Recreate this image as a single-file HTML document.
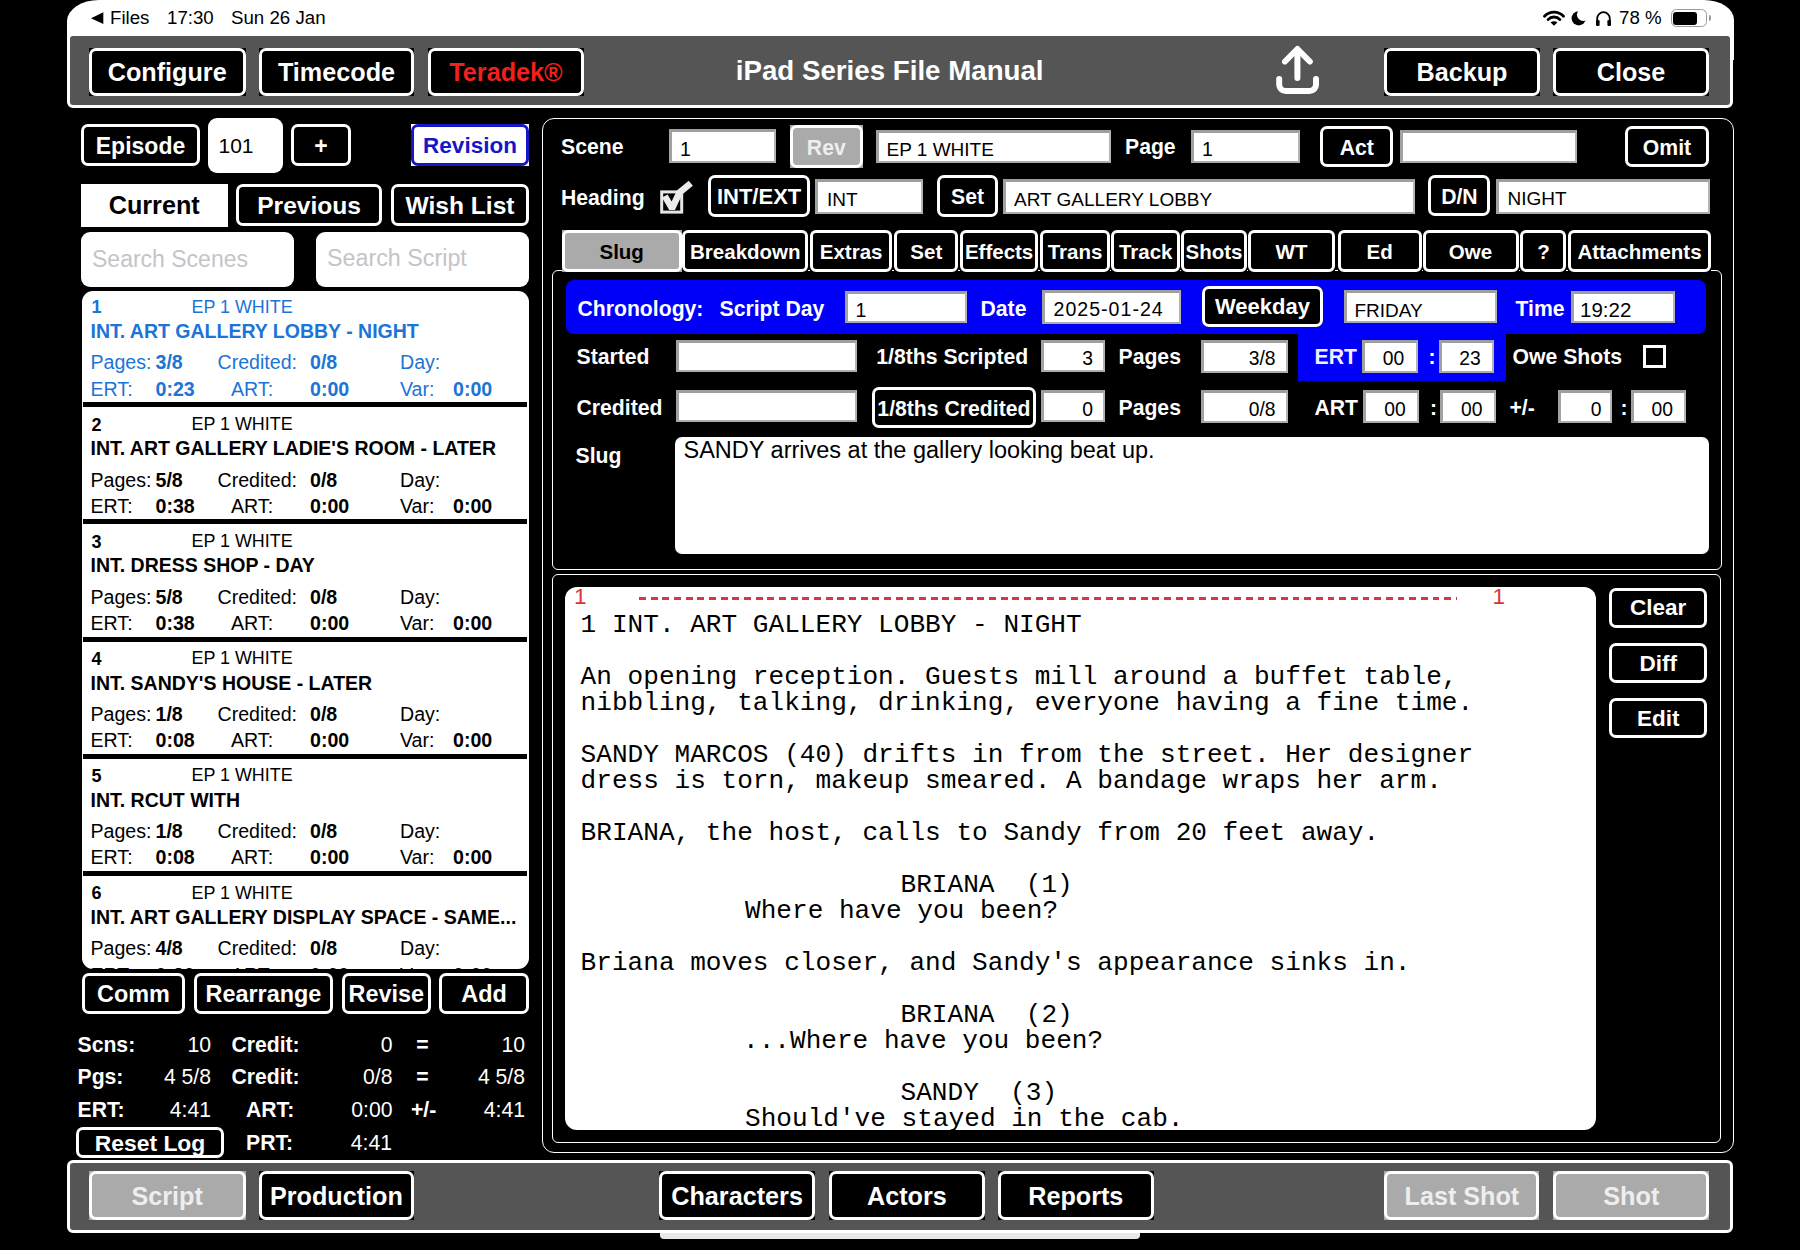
<!DOCTYPE html><html><head><meta charset="utf-8"><style>
html,body{margin:0;padding:0}
body{width:1800px;height:1250px;background:#000;position:relative;overflow:hidden;font-family:"Liberation Sans",sans-serif}
.a{position:absolute}
.t{position:absolute;white-space:pre}
.m{position:absolute;white-space:pre;font-family:"Liberation Mono",monospace}
</style></head><body>
<div class="a" style="left:67.0px;top:0.0px;width:1666.5px;height:60.0px;background:#fff;border-radius:32px 30px 0 0 / 21px 20px 0 0"></div>
<svg class="a" style="left:90px;top:11px" width="16" height="15" viewBox="0 0 16 15"><path d="M1 7.2 L13.3 1.3 L13.3 13.1 Z" fill="#000"/></svg>
<div class="t" style="left:110.0px;top:9.2px;font-size:18.7px;line-height:18.7px;font-weight:normal;color:#000;">Files</div>
<div class="t" style="left:167.0px;top:9.2px;font-size:18.7px;line-height:18.7px;font-weight:normal;color:#000;">17:30</div>
<div class="t" style="left:231.0px;top:9.2px;font-size:18.7px;line-height:18.7px;font-weight:normal;color:#000;">Sun 26 Jan</div>
<div class="t" style="left:1619.0px;top:9.2px;font-size:18.7px;line-height:18.7px;font-weight:normal;color:#000;">78 %</div>
<svg class="a" style="left:1543px;top:10px" width="22" height="17" viewBox="0 0 22 17"><path d="M1.5 6.2 A13 13 0 0 1 20.5 6.2" stroke="#000" stroke-width="2.8" fill="none" stroke-linecap="round"/><path d="M5 9.6 A8.2 8.2 0 0 1 17 9.6" stroke="#000" stroke-width="2.8" fill="none" stroke-linecap="round"/><path d="M11 15.8 L7.6 12.6 A4.8 4.8 0 0 1 14.4 12.6 Z" fill="#000"/></svg>
<svg class="a" style="left:1570px;top:9px" width="18" height="18" viewBox="0 0 18 18"><defs><mask id="mm"><rect width="18" height="18" fill="#fff"/><circle cx="13.2" cy="5.6" r="6.3" fill="#000"/></mask></defs><circle cx="8.7" cy="9.3" r="7.1" fill="#000" mask="url(#mm)"/></svg>
<svg class="a" style="left:1595px;top:10px" width="17" height="17" viewBox="0 0 17 17"><path d="M2.2 12 V8.5 A6.3 6.3 0 0 1 14.8 8.5 V12" stroke="#000" stroke-width="1.8" fill="none"/><rect x="1" y="10" width="3.6" height="6" rx="1.2" fill="#000"/><rect x="12.4" y="10" width="3.6" height="6" rx="1.2" fill="#000"/></svg>
<div class="a" style="left:1670.5px;top:9.3px;width:36.5px;height:18.0px;border:1.6px solid #999;border-radius:5.5px;box-sizing:border-box"></div>
<div class="a" style="left:1673.3px;top:12.2px;width:23.7px;height:12.4px;background:#000;border-radius:3px"></div>
<div class="a" style="left:1708.6px;top:15.0px;width:2.2px;height:6.3px;background:#999;border-radius:0 3px 3px 0"></div>
<div class="a" style="left:67.0px;top:33.0px;width:1666.0px;height:75.0px;background:#555;border:3px solid #fff;border-radius:6px;box-sizing:border-box"></div>
<div class="a" style="left:89.0px;top:47.5px;width:156.5px;height:48.5px;background:#000"></div>
<div class="a" style="left:89.0px;top:47.5px;width:156.5px;height:48.5px;border:3px solid #fff;border-radius:7px;box-sizing:border-box"></div>
<div class="t" style="left:-232.8px;width:800px;text-align:center;top:60.1px;font-size:25.2px;line-height:25.2px;font-weight:bold;color:#fff;">Configure</div>
<div class="a" style="left:258.7px;top:47.5px;width:155.6px;height:48.5px;background:#000"></div>
<div class="a" style="left:258.7px;top:47.5px;width:155.6px;height:48.5px;border:3px solid #fff;border-radius:7px;box-sizing:border-box"></div>
<div class="t" style="left:-63.5px;width:800px;text-align:center;top:60.1px;font-size:25.2px;line-height:25.2px;font-weight:bold;color:#fff;">Timecode</div>
<div class="a" style="left:428.3px;top:47.5px;width:155.4px;height:48.5px;background:#000"></div>
<div class="a" style="left:428.3px;top:47.5px;width:155.4px;height:48.5px;border:3px solid #fff;border-radius:7px;box-sizing:border-box"></div>
<div class="t" style="left:106.0px;width:800px;text-align:center;top:60.1px;font-size:25.2px;line-height:25.2px;font-weight:bold;color:#f0201a;">Teradek®</div>
<div class="t" style="left:489.7px;width:800px;text-align:center;top:56.5px;font-size:27.7px;line-height:27.7px;font-weight:bold;color:#fff;">iPad Series File Manual</div>
<div class="a" style="left:1384.0px;top:47.5px;width:156.0px;height:48.5px;background:#000"></div>
<div class="a" style="left:1384.0px;top:47.5px;width:156.0px;height:48.5px;border:3px solid #fff;border-radius:7px;box-sizing:border-box"></div>
<div class="t" style="left:1062.0px;width:800px;text-align:center;top:60.1px;font-size:25.2px;line-height:25.2px;font-weight:bold;color:#fff;">Backup</div>
<div class="a" style="left:1553.0px;top:47.5px;width:156.0px;height:48.5px;background:#000"></div>
<div class="a" style="left:1553.0px;top:47.5px;width:156.0px;height:48.5px;border:3px solid #fff;border-radius:7px;box-sizing:border-box"></div>
<div class="t" style="left:1231.0px;width:800px;text-align:center;top:60.1px;font-size:25.2px;line-height:25.2px;font-weight:bold;color:#fff;">Close</div>
<svg class="a" style="left:1270px;top:40px" width="56" height="60" viewBox="1270 40 56 60"><path d="M1297.4 78 V50" stroke="#fff" stroke-width="6" stroke-linecap="round" fill="none"/><path d="M1285 61.5 L1297.4 49 L1309.8 61.5" stroke="#fff" stroke-width="6" stroke-linecap="round" stroke-linejoin="round" fill="none"/><path d="M1279.2 79 V84.5 A6.5 6.5 0 0 0 1285.7 91 H1309.5 A6.5 6.5 0 0 0 1316 84.5 V79" stroke="#fff" stroke-width="6" stroke-linecap="round" fill="none"/></svg>
<div class="a" style="left:81.0px;top:124.0px;width:119.0px;height:42.3px;background:#000"></div>
<div class="a" style="left:81.0px;top:124.0px;width:119.0px;height:42.3px;border:3px solid #fff;border-radius:7px;box-sizing:border-box"></div>
<div class="t" style="left:-259.5px;width:800px;text-align:center;top:134.6px;font-size:23px;line-height:23px;font-weight:bold;color:#fff;">Episode</div>
<div class="a" style="left:208.0px;top:118.0px;width:75.0px;height:54.5px;background:#fff;border-radius:9px"></div>
<div class="t" style="left:218.5px;top:135.2px;font-size:21px;line-height:21px;font-weight:normal;color:#000;">101</div>
<div class="a" style="left:291.0px;top:124.0px;width:60.0px;height:42.3px;background:#000"></div>
<div class="a" style="left:291.0px;top:124.0px;width:60.0px;height:42.3px;border:3px solid #fff;border-radius:7px;box-sizing:border-box"></div>
<div class="t" style="left:-79.0px;width:800px;text-align:center;top:134.6px;font-size:23px;line-height:23px;font-weight:bold;color:#fff;">+</div>
<div class="a" style="left:411.0px;top:123.7px;width:118.0px;height:42.6px;background:#fff"></div>
<div class="a" style="left:411.0px;top:123.7px;width:118.0px;height:42.6px;border:3px solid #1616c8;border-radius:7px;box-sizing:border-box"></div>
<div class="t" style="left:70.0px;width:800px;text-align:center;top:134.7px;font-size:22.5px;line-height:22.5px;font-weight:bold;color:#1616c8;">Revision</div>
<div class="a" style="left:81.0px;top:184.0px;width:146.5px;height:43.0px;background:#fff"></div>
<div class="t" style="left:-245.8px;width:800px;text-align:center;top:192.9px;font-size:25.2px;line-height:25.2px;font-weight:bold;color:#000;">Current</div>
<div class="a" style="left:236.0px;top:184.3px;width:146.3px;height:42.0px;background:#000"></div>
<div class="a" style="left:236.0px;top:184.3px;width:146.3px;height:42.0px;border:3px solid #fff;border-radius:7px;box-sizing:border-box"></div>
<div class="t" style="left:-90.9px;width:800px;text-align:center;top:193.9px;font-size:24.6px;line-height:24.6px;font-weight:bold;color:#fff;">Previous</div>
<div class="a" style="left:391.0px;top:184.3px;width:138.0px;height:42.0px;background:#000"></div>
<div class="a" style="left:391.0px;top:184.3px;width:138.0px;height:42.0px;border:3px solid #fff;border-radius:7px;box-sizing:border-box"></div>
<div class="t" style="left:60.0px;width:800px;text-align:center;top:193.9px;font-size:24.6px;line-height:24.6px;font-weight:bold;color:#fff;">Wish List</div>
<div class="a" style="left:81.0px;top:231.5px;width:213.0px;height:55.0px;background:#fff;border-radius:9px"></div>
<div class="t" style="left:92.0px;top:247.5px;font-size:23px;line-height:23px;font-weight:normal;color:#c4c4c8;">Search Scenes</div>
<div class="a" style="left:316.0px;top:231.5px;width:213.0px;height:55.0px;background:#fff;border-radius:9px"></div>
<div class="t" style="left:327.0px;top:247.3px;font-size:23.3px;line-height:23.3px;font-weight:normal;color:#c4c4c8;">Search Script</div>
<div class="a" style="left:81.5px;top:290.5px;width:447px;height:678px;background:#fff;border-radius:11px;overflow:hidden">
<div class="t" style="left:9.9px;top:7.9px;font-size:18px;line-height:18px;font-weight:bold;color:#1b74d6;">1</div>
<div class="t" style="left:110.0px;top:8.1px;font-size:17.9px;line-height:17.9px;font-weight:normal;color:#1b74d6;">EP 1 WHITE</div>
<div class="t" style="left:9.0px;top:31.4px;font-size:19.5px;line-height:19.5px;font-weight:bold;color:#1b74d6;">INT. ART GALLERY LOBBY - NIGHT</div>
<div class="t" style="left:9.0px;top:62.9px;font-size:19.6px;line-height:19.6px;font-weight:normal;color:#1b74d6;">Pages:</div>
<div class="t" style="left:74.0px;top:62.9px;font-size:19.6px;line-height:19.6px;font-weight:bold;color:#1b74d6;">3/8</div>
<div class="t" style="left:136.0px;top:62.9px;font-size:19.6px;line-height:19.6px;font-weight:normal;color:#1b74d6;">Credited:</div>
<div class="t" style="left:228.5px;top:62.9px;font-size:19.6px;line-height:19.6px;font-weight:bold;color:#1b74d6;">0/8</div>
<div class="t" style="left:318.5px;top:62.9px;font-size:19.6px;line-height:19.6px;font-weight:normal;color:#1b74d6;">Day:</div>
<div class="t" style="left:9.0px;top:89.0px;font-size:19.6px;line-height:19.6px;font-weight:normal;color:#1b74d6;">ERT:</div>
<div class="t" style="left:74.0px;top:89.0px;font-size:19.6px;line-height:19.6px;font-weight:bold;color:#1b74d6;">0:23</div>
<div class="t" style="left:149.5px;top:89.0px;font-size:19.6px;line-height:19.6px;font-weight:normal;color:#1b74d6;">ART:</div>
<div class="t" style="left:228.5px;top:89.0px;font-size:19.6px;line-height:19.6px;font-weight:bold;color:#1b74d6;">0:00</div>
<div class="t" style="left:318.5px;top:89.0px;font-size:19.6px;line-height:19.6px;font-weight:normal;color:#1b74d6;">Var:</div>
<div class="t" style="left:371.5px;top:89.0px;font-size:19.6px;line-height:19.6px;font-weight:bold;color:#1b74d6;">0:00</div>
<div class="a" style="left:1.0px;top:111.7px;width:444.5px;height:5.0px;background:#000"></div>
<div class="t" style="left:9.9px;top:125.1px;font-size:18px;line-height:18px;font-weight:bold;color:#000;">2</div>
<div class="t" style="left:110.0px;top:125.3px;font-size:17.9px;line-height:17.9px;font-weight:normal;color:#000;">EP 1 WHITE</div>
<div class="t" style="left:9.0px;top:148.6px;font-size:19.5px;line-height:19.5px;font-weight:bold;color:#000;">INT. ART GALLERY LADIE'S ROOM - LATER</div>
<div class="t" style="left:9.0px;top:180.1px;font-size:19.6px;line-height:19.6px;font-weight:normal;color:#000;">Pages:</div>
<div class="t" style="left:74.0px;top:180.1px;font-size:19.6px;line-height:19.6px;font-weight:bold;color:#000;">5/8</div>
<div class="t" style="left:136.0px;top:180.1px;font-size:19.6px;line-height:19.6px;font-weight:normal;color:#000;">Credited:</div>
<div class="t" style="left:228.5px;top:180.1px;font-size:19.6px;line-height:19.6px;font-weight:bold;color:#000;">0/8</div>
<div class="t" style="left:318.5px;top:180.1px;font-size:19.6px;line-height:19.6px;font-weight:normal;color:#000;">Day:</div>
<div class="t" style="left:9.0px;top:206.2px;font-size:19.6px;line-height:19.6px;font-weight:normal;color:#000;">ERT:</div>
<div class="t" style="left:74.0px;top:206.2px;font-size:19.6px;line-height:19.6px;font-weight:bold;color:#000;">0:38</div>
<div class="t" style="left:149.5px;top:206.2px;font-size:19.6px;line-height:19.6px;font-weight:normal;color:#000;">ART:</div>
<div class="t" style="left:228.5px;top:206.2px;font-size:19.6px;line-height:19.6px;font-weight:bold;color:#000;">0:00</div>
<div class="t" style="left:318.5px;top:206.2px;font-size:19.6px;line-height:19.6px;font-weight:normal;color:#000;">Var:</div>
<div class="t" style="left:371.5px;top:206.2px;font-size:19.6px;line-height:19.6px;font-weight:bold;color:#000;">0:00</div>
<div class="a" style="left:1.0px;top:228.9px;width:444.5px;height:5.0px;background:#000"></div>
<div class="t" style="left:9.9px;top:242.3px;font-size:18px;line-height:18px;font-weight:bold;color:#000;">3</div>
<div class="t" style="left:110.0px;top:242.5px;font-size:17.9px;line-height:17.9px;font-weight:normal;color:#000;">EP 1 WHITE</div>
<div class="t" style="left:9.0px;top:265.8px;font-size:19.5px;line-height:19.5px;font-weight:bold;color:#000;">INT. DRESS SHOP - DAY</div>
<div class="t" style="left:9.0px;top:297.3px;font-size:19.6px;line-height:19.6px;font-weight:normal;color:#000;">Pages:</div>
<div class="t" style="left:74.0px;top:297.3px;font-size:19.6px;line-height:19.6px;font-weight:bold;color:#000;">5/8</div>
<div class="t" style="left:136.0px;top:297.3px;font-size:19.6px;line-height:19.6px;font-weight:normal;color:#000;">Credited:</div>
<div class="t" style="left:228.5px;top:297.3px;font-size:19.6px;line-height:19.6px;font-weight:bold;color:#000;">0/8</div>
<div class="t" style="left:318.5px;top:297.3px;font-size:19.6px;line-height:19.6px;font-weight:normal;color:#000;">Day:</div>
<div class="t" style="left:9.0px;top:323.4px;font-size:19.6px;line-height:19.6px;font-weight:normal;color:#000;">ERT:</div>
<div class="t" style="left:74.0px;top:323.4px;font-size:19.6px;line-height:19.6px;font-weight:bold;color:#000;">0:38</div>
<div class="t" style="left:149.5px;top:323.4px;font-size:19.6px;line-height:19.6px;font-weight:normal;color:#000;">ART:</div>
<div class="t" style="left:228.5px;top:323.4px;font-size:19.6px;line-height:19.6px;font-weight:bold;color:#000;">0:00</div>
<div class="t" style="left:318.5px;top:323.4px;font-size:19.6px;line-height:19.6px;font-weight:normal;color:#000;">Var:</div>
<div class="t" style="left:371.5px;top:323.4px;font-size:19.6px;line-height:19.6px;font-weight:bold;color:#000;">0:00</div>
<div class="a" style="left:1.0px;top:346.1px;width:444.5px;height:5.0px;background:#000"></div>
<div class="t" style="left:9.9px;top:359.5px;font-size:18px;line-height:18px;font-weight:bold;color:#000;">4</div>
<div class="t" style="left:110.0px;top:359.7px;font-size:17.9px;line-height:17.9px;font-weight:normal;color:#000;">EP 1 WHITE</div>
<div class="t" style="left:9.0px;top:383.0px;font-size:19.5px;line-height:19.5px;font-weight:bold;color:#000;">INT. SANDY'S HOUSE - LATER</div>
<div class="t" style="left:9.0px;top:414.5px;font-size:19.6px;line-height:19.6px;font-weight:normal;color:#000;">Pages:</div>
<div class="t" style="left:74.0px;top:414.5px;font-size:19.6px;line-height:19.6px;font-weight:bold;color:#000;">1/8</div>
<div class="t" style="left:136.0px;top:414.5px;font-size:19.6px;line-height:19.6px;font-weight:normal;color:#000;">Credited:</div>
<div class="t" style="left:228.5px;top:414.5px;font-size:19.6px;line-height:19.6px;font-weight:bold;color:#000;">0/8</div>
<div class="t" style="left:318.5px;top:414.5px;font-size:19.6px;line-height:19.6px;font-weight:normal;color:#000;">Day:</div>
<div class="t" style="left:9.0px;top:440.6px;font-size:19.6px;line-height:19.6px;font-weight:normal;color:#000;">ERT:</div>
<div class="t" style="left:74.0px;top:440.6px;font-size:19.6px;line-height:19.6px;font-weight:bold;color:#000;">0:08</div>
<div class="t" style="left:149.5px;top:440.6px;font-size:19.6px;line-height:19.6px;font-weight:normal;color:#000;">ART:</div>
<div class="t" style="left:228.5px;top:440.6px;font-size:19.6px;line-height:19.6px;font-weight:bold;color:#000;">0:00</div>
<div class="t" style="left:318.5px;top:440.6px;font-size:19.6px;line-height:19.6px;font-weight:normal;color:#000;">Var:</div>
<div class="t" style="left:371.5px;top:440.6px;font-size:19.6px;line-height:19.6px;font-weight:bold;color:#000;">0:00</div>
<div class="a" style="left:1.0px;top:463.3px;width:444.5px;height:5.0px;background:#000"></div>
<div class="t" style="left:9.9px;top:476.7px;font-size:18px;line-height:18px;font-weight:bold;color:#000;">5</div>
<div class="t" style="left:110.0px;top:476.9px;font-size:17.9px;line-height:17.9px;font-weight:normal;color:#000;">EP 1 WHITE</div>
<div class="t" style="left:9.0px;top:500.2px;font-size:19.5px;line-height:19.5px;font-weight:bold;color:#000;">INT. RCUT WITH</div>
<div class="t" style="left:9.0px;top:531.7px;font-size:19.6px;line-height:19.6px;font-weight:normal;color:#000;">Pages:</div>
<div class="t" style="left:74.0px;top:531.7px;font-size:19.6px;line-height:19.6px;font-weight:bold;color:#000;">1/8</div>
<div class="t" style="left:136.0px;top:531.7px;font-size:19.6px;line-height:19.6px;font-weight:normal;color:#000;">Credited:</div>
<div class="t" style="left:228.5px;top:531.7px;font-size:19.6px;line-height:19.6px;font-weight:bold;color:#000;">0/8</div>
<div class="t" style="left:318.5px;top:531.7px;font-size:19.6px;line-height:19.6px;font-weight:normal;color:#000;">Day:</div>
<div class="t" style="left:9.0px;top:557.8px;font-size:19.6px;line-height:19.6px;font-weight:normal;color:#000;">ERT:</div>
<div class="t" style="left:74.0px;top:557.8px;font-size:19.6px;line-height:19.6px;font-weight:bold;color:#000;">0:08</div>
<div class="t" style="left:149.5px;top:557.8px;font-size:19.6px;line-height:19.6px;font-weight:normal;color:#000;">ART:</div>
<div class="t" style="left:228.5px;top:557.8px;font-size:19.6px;line-height:19.6px;font-weight:bold;color:#000;">0:00</div>
<div class="t" style="left:318.5px;top:557.8px;font-size:19.6px;line-height:19.6px;font-weight:normal;color:#000;">Var:</div>
<div class="t" style="left:371.5px;top:557.8px;font-size:19.6px;line-height:19.6px;font-weight:bold;color:#000;">0:00</div>
<div class="a" style="left:1.0px;top:580.5px;width:444.5px;height:5.0px;background:#000"></div>
<div class="t" style="left:9.9px;top:593.9px;font-size:18px;line-height:18px;font-weight:bold;color:#000;">6</div>
<div class="t" style="left:110.0px;top:594.1px;font-size:17.9px;line-height:17.9px;font-weight:normal;color:#000;">EP 1 WHITE</div>
<div class="t" style="left:9.0px;top:617.4px;font-size:19.5px;line-height:19.5px;font-weight:bold;color:#000;">INT. ART GALLERY DISPLAY SPACE - SAME...</div>
<div class="t" style="left:9.0px;top:648.9px;font-size:19.6px;line-height:19.6px;font-weight:normal;color:#000;">Pages:</div>
<div class="t" style="left:74.0px;top:648.9px;font-size:19.6px;line-height:19.6px;font-weight:bold;color:#000;">4/8</div>
<div class="t" style="left:136.0px;top:648.9px;font-size:19.6px;line-height:19.6px;font-weight:normal;color:#000;">Credited:</div>
<div class="t" style="left:228.5px;top:648.9px;font-size:19.6px;line-height:19.6px;font-weight:bold;color:#000;">0/8</div>
<div class="t" style="left:318.5px;top:648.9px;font-size:19.6px;line-height:19.6px;font-weight:normal;color:#000;">Day:</div>
<div class="t" style="left:9.0px;top:675.0px;font-size:19.6px;line-height:19.6px;font-weight:normal;color:#000;">ERT:</div>
<div class="t" style="left:74.0px;top:675.0px;font-size:19.6px;line-height:19.6px;font-weight:bold;color:#000;">0:30</div>
<div class="t" style="left:149.5px;top:675.0px;font-size:19.6px;line-height:19.6px;font-weight:normal;color:#000;">ART:</div>
<div class="t" style="left:228.5px;top:675.0px;font-size:19.6px;line-height:19.6px;font-weight:bold;color:#000;">0:00</div>
<div class="t" style="left:318.5px;top:675.0px;font-size:19.6px;line-height:19.6px;font-weight:normal;color:#000;">Var:</div>
<div class="t" style="left:371.5px;top:675.0px;font-size:19.6px;line-height:19.6px;font-weight:bold;color:#000;">0:00</div>
</div>
<div class="a" style="left:81.7px;top:973.0px;width:103.3px;height:41.0px;background:#000"></div>
<div class="a" style="left:81.7px;top:973.0px;width:103.3px;height:41.0px;border:3px solid #fff;border-radius:7px;box-sizing:border-box"></div>
<div class="t" style="left:-266.6px;width:800px;text-align:center;top:982.7px;font-size:23.4px;line-height:23.4px;font-weight:bold;color:#fff;">Comm</div>
<div class="a" style="left:193.5px;top:973.0px;width:139.7px;height:41.0px;background:#000"></div>
<div class="a" style="left:193.5px;top:973.0px;width:139.7px;height:41.0px;border:3px solid #fff;border-radius:7px;box-sizing:border-box"></div>
<div class="t" style="left:-136.6px;width:800px;text-align:center;top:982.7px;font-size:23.4px;line-height:23.4px;font-weight:bold;color:#fff;">Rearrange</div>
<div class="a" style="left:341.5px;top:973.0px;width:89.6px;height:41.0px;background:#000"></div>
<div class="a" style="left:341.5px;top:973.0px;width:89.6px;height:41.0px;border:3px solid #fff;border-radius:7px;box-sizing:border-box"></div>
<div class="t" style="left:-13.7px;width:800px;text-align:center;top:982.7px;font-size:23.4px;line-height:23.4px;font-weight:bold;color:#fff;">Revise</div>
<div class="a" style="left:439.4px;top:973.0px;width:89.3px;height:41.0px;background:#000"></div>
<div class="a" style="left:439.4px;top:973.0px;width:89.3px;height:41.0px;border:3px solid #fff;border-radius:7px;box-sizing:border-box"></div>
<div class="t" style="left:84.1px;width:800px;text-align:center;top:982.7px;font-size:23.4px;line-height:23.4px;font-weight:bold;color:#fff;">Add</div>
<div class="t" style="left:77.5px;top:1034.2px;font-size:21.2px;line-height:21.2px;font-weight:bold;color:#fff;">Scns:</div>
<div class="t" style="left:-589.0px;width:800px;text-align:right;top:1034.2px;font-size:21.2px;line-height:21.2px;font-weight:normal;color:#fff;">10</div>
<div class="t" style="left:231.4px;top:1034.2px;font-size:21.2px;line-height:21.2px;font-weight:bold;color:#fff;">Credit:</div>
<div class="t" style="left:-407.5px;width:800px;text-align:right;top:1034.2px;font-size:21.2px;line-height:21.2px;font-weight:normal;color:#fff;">0</div>
<div class="t" style="left:22.5px;width:800px;text-align:center;top:1034.2px;font-size:21.2px;line-height:21.2px;font-weight:bold;color:#fff;">=</div>
<div class="t" style="left:-275.0px;width:800px;text-align:right;top:1034.2px;font-size:21.2px;line-height:21.2px;font-weight:normal;color:#fff;">10</div>
<div class="t" style="left:77.5px;top:1066.4px;font-size:21.2px;line-height:21.2px;font-weight:bold;color:#fff;">Pgs:</div>
<div class="t" style="left:-589.0px;width:800px;text-align:right;top:1066.4px;font-size:21.2px;line-height:21.2px;font-weight:normal;color:#fff;">4 5/8</div>
<div class="t" style="left:231.4px;top:1066.4px;font-size:21.2px;line-height:21.2px;font-weight:bold;color:#fff;">Credit:</div>
<div class="t" style="left:-407.5px;width:800px;text-align:right;top:1066.4px;font-size:21.2px;line-height:21.2px;font-weight:normal;color:#fff;">0/8</div>
<div class="t" style="left:22.5px;width:800px;text-align:center;top:1066.4px;font-size:21.2px;line-height:21.2px;font-weight:bold;color:#fff;">=</div>
<div class="t" style="left:-275.0px;width:800px;text-align:right;top:1066.4px;font-size:21.2px;line-height:21.2px;font-weight:normal;color:#fff;">4 5/8</div>
<div class="t" style="left:77.5px;top:1099.0px;font-size:21.2px;line-height:21.2px;font-weight:bold;color:#fff;">ERT:</div>
<div class="t" style="left:-589.0px;width:800px;text-align:right;top:1099.0px;font-size:21.2px;line-height:21.2px;font-weight:normal;color:#fff;">4:41</div>
<div class="t" style="left:246.0px;top:1099.0px;font-size:21.2px;line-height:21.2px;font-weight:bold;color:#fff;">ART:</div>
<div class="t" style="left:-407.5px;width:800px;text-align:right;top:1099.0px;font-size:21.2px;line-height:21.2px;font-weight:normal;color:#fff;">0:00</div>
<div class="t" style="left:411.0px;top:1099.0px;font-size:21.2px;line-height:21.2px;font-weight:bold;color:#fff;">+/-</div>
<div class="t" style="left:-275.0px;width:800px;text-align:right;top:1099.0px;font-size:21.2px;line-height:21.2px;font-weight:normal;color:#fff;">4:41</div>
<div class="a" style="left:76.0px;top:1126.5px;width:148.0px;height:31.5px;background:#000"></div>
<div class="a" style="left:76.0px;top:1126.5px;width:148.0px;height:31.5px;border:3px solid #fff;border-radius:7px;box-sizing:border-box"></div>
<div class="t" style="left:-250.0px;width:800px;text-align:center;top:1131.7px;font-size:22.9px;line-height:22.9px;font-weight:bold;color:#fff;">Reset Log</div>
<div class="t" style="left:246.0px;top:1131.7px;font-size:21.2px;line-height:21.2px;font-weight:bold;color:#fff;">PRT:</div>
<div class="t" style="left:-408.0px;width:800px;text-align:right;top:1131.7px;font-size:21.2px;line-height:21.2px;font-weight:normal;color:#fff;">4:41</div>
<div class="a" style="left:541.5px;top:118.0px;width:1192.0px;height:1035.0px;border:1.5px solid #fff;border-radius:12px;box-sizing:border-box"></div>
<div class="t" style="left:561.0px;top:135.5px;font-size:21.2px;line-height:21.2px;font-weight:bold;color:#fff;">Scene</div>
<div class="a" style="left:669.2px;top:129.0px;width:106.9px;height:34.0px;background:#fff;border-style:solid;border-color:#9e9e9e #b4b4b4 #acacac #a2a2a2;border-width:3px 2px 2px 3px;box-sizing:border-box"></div>
<div class="t" style="left:680.0px;top:139.7px;font-size:19.5px;line-height:19.5px;font-weight:normal;color:#000;">1</div>
<div class="a" style="left:789.6px;top:125.1px;width:73.4px;height:42.6px;background:#aaa"></div>
<div class="a" style="left:789.6px;top:125.1px;width:73.4px;height:42.6px;border:3px solid #fff;border-radius:7px;box-sizing:border-box"></div>
<div class="t" style="left:426.3px;width:800px;text-align:center;top:136.7px;font-size:21.2px;line-height:21.2px;font-weight:bold;color:#eee;">Rev</div>
<div class="a" style="left:875.7px;top:129.5px;width:235.3px;height:33.3px;background:#fff;border-style:solid;border-color:#9e9e9e #b4b4b4 #acacac #a2a2a2;border-width:3px 2px 2px 3px;box-sizing:border-box"></div>
<div class="t" style="left:886.5px;top:140.1px;font-size:19px;line-height:19px;font-weight:normal;color:#000;">EP 1 WHITE</div>
<div class="t" style="left:1125.0px;top:135.8px;font-size:21.2px;line-height:21.2px;font-weight:bold;color:#fff;">Page</div>
<div class="a" style="left:1190.7px;top:129.5px;width:109.5px;height:33.1px;background:#fff;border-style:solid;border-color:#9e9e9e #b4b4b4 #acacac #a2a2a2;border-width:3px 2px 2px 3px;box-sizing:border-box"></div>
<div class="t" style="left:1202.0px;top:139.7px;font-size:19.5px;line-height:19.5px;font-weight:normal;color:#000;">1</div>
<div class="a" style="left:1320.4px;top:126.0px;width:72.9px;height:41.0px;background:#000"></div>
<div class="a" style="left:1320.4px;top:126.0px;width:72.9px;height:41.0px;border:3px solid #fff;border-radius:7px;box-sizing:border-box"></div>
<div class="t" style="left:956.8px;width:800px;text-align:center;top:136.8px;font-size:21.2px;line-height:21.2px;font-weight:bold;color:#fff;">Act</div>
<div class="a" style="left:1400.4px;top:129.5px;width:176.8px;height:33.1px;background:#fff;border-style:solid;border-color:#9e9e9e #b4b4b4 #acacac #a2a2a2;border-width:3px 2px 2px 3px;box-sizing:border-box"></div>
<div class="a" style="left:1625.2px;top:126.0px;width:83.5px;height:41.0px;background:#000"></div>
<div class="a" style="left:1625.2px;top:126.0px;width:83.5px;height:41.0px;border:3px solid #fff;border-radius:7px;box-sizing:border-box"></div>
<div class="t" style="left:1267.0px;width:800px;text-align:center;top:136.8px;font-size:21.2px;line-height:21.2px;font-weight:bold;color:#fff;">Omit</div>
<div class="t" style="left:561.0px;top:187.0px;font-size:21.2px;line-height:21.2px;font-weight:bold;color:#fff;">Heading</div>
<svg class="a" style="left:655px;top:175px" width="45" height="45" viewBox="655 175 45 45"><rect x="661.7" y="191.9" width="20" height="20.2" stroke="#e6e6e6" stroke-width="3" fill="none"/><path d="M664.8 196 L672 208.5 L679.5 192.5 L690.8 183.2" stroke="#ececec" stroke-width="6.5" fill="none" stroke-linejoin="bevel"/></svg>
<div class="a" style="left:708.3px;top:175.0px;width:101.7px;height:41.7px;background:#000"></div>
<div class="a" style="left:708.3px;top:175.0px;width:101.7px;height:41.7px;border:3px solid #fff;border-radius:7px;box-sizing:border-box"></div>
<div class="t" style="left:359.1px;width:800px;text-align:center;top:185.8px;font-size:22px;line-height:22px;font-weight:bold;color:#fff;">INT/EXT</div>
<div class="a" style="left:815.3px;top:178.8px;width:107.4px;height:35.2px;background:#fff;border-style:solid;border-color:#9e9e9e #b4b4b4 #acacac #a2a2a2;border-width:3px 2px 2px 3px;box-sizing:border-box"></div>
<div class="t" style="left:827.0px;top:189.9px;font-size:19px;line-height:19px;font-weight:normal;color:#000;">INT</div>
<div class="a" style="left:936.7px;top:175.0px;width:61.6px;height:41.7px;background:#000"></div>
<div class="a" style="left:936.7px;top:175.0px;width:61.6px;height:41.7px;border:3px solid #fff;border-radius:7px;box-sizing:border-box"></div>
<div class="t" style="left:567.5px;width:800px;text-align:center;top:186.2px;font-size:21.2px;line-height:21.2px;font-weight:bold;color:#fff;">Set</div>
<div class="a" style="left:1003.3px;top:178.8px;width:411.4px;height:35.2px;background:#fff;border-style:solid;border-color:#9e9e9e #b4b4b4 #acacac #a2a2a2;border-width:3px 2px 2px 3px;box-sizing:border-box"></div>
<div class="t" style="left:1014.0px;top:189.9px;font-size:19px;line-height:19px;font-weight:normal;color:#000;">ART GALLERY LOBBY</div>
<div class="a" style="left:1428.4px;top:175.0px;width:62.0px;height:41.0px;background:#000"></div>
<div class="a" style="left:1428.4px;top:175.0px;width:62.0px;height:41.0px;border:3px solid #fff;border-radius:7px;box-sizing:border-box"></div>
<div class="t" style="left:1059.4px;width:800px;text-align:center;top:185.8px;font-size:21.2px;line-height:21.2px;font-weight:bold;color:#fff;">D/N</div>
<div class="a" style="left:1496.4px;top:178.8px;width:214.1px;height:35.2px;background:#fff;border-style:solid;border-color:#9e9e9e #b4b4b4 #acacac #a2a2a2;border-width:3px 2px 2px 3px;box-sizing:border-box"></div>
<div class="t" style="left:1507.5px;top:188.7px;font-size:19px;line-height:19px;font-weight:normal;color:#000;">NIGHT</div>
<div class="a" style="left:552.0px;top:270.3px;width:1169.5px;height:299.5px;border:1.5px solid #fff;border-radius:6px;box-sizing:border-box"></div>
<div class="a" style="left:561.7px;top:230.2px;width:120.0px;height:41.6px;background:#aaa"></div>
<div class="a" style="left:561.7px;top:230.2px;width:120.0px;height:41.6px;border:3px solid #fff;border-radius:6px;box-sizing:border-box"></div>
<div class="t" style="left:221.7px;width:800px;text-align:center;top:241.7px;font-size:20.5px;line-height:20.5px;font-weight:bold;color:#000;">Slug</div>
<div class="a" style="left:682.3px;top:230.2px;width:126.0px;height:41.6px;background:#000"></div>
<div class="a" style="left:682.3px;top:230.2px;width:126.0px;height:41.6px;border:3px solid #fff;border-radius:6px;box-sizing:border-box"></div>
<div class="t" style="left:345.3px;width:800px;text-align:center;top:241.7px;font-size:20.5px;line-height:20.5px;font-weight:bold;color:#fff;">Breakdown</div>
<div class="a" style="left:810.0px;top:230.2px;width:82.3px;height:41.6px;background:#000"></div>
<div class="a" style="left:810.0px;top:230.2px;width:82.3px;height:41.6px;border:3px solid #fff;border-radius:6px;box-sizing:border-box"></div>
<div class="t" style="left:451.1px;width:800px;text-align:center;top:241.7px;font-size:20.5px;line-height:20.5px;font-weight:bold;color:#fff;">Extras</div>
<div class="a" style="left:894.3px;top:230.2px;width:64.0px;height:41.6px;background:#000"></div>
<div class="a" style="left:894.3px;top:230.2px;width:64.0px;height:41.6px;border:3px solid #fff;border-radius:6px;box-sizing:border-box"></div>
<div class="t" style="left:526.3px;width:800px;text-align:center;top:241.7px;font-size:20.5px;line-height:20.5px;font-weight:bold;color:#fff;">Set</div>
<div class="a" style="left:960.0px;top:230.2px;width:78.3px;height:41.6px;background:#000"></div>
<div class="a" style="left:960.0px;top:230.2px;width:78.3px;height:41.6px;border:3px solid #fff;border-radius:6px;box-sizing:border-box"></div>
<div class="t" style="left:599.1px;width:800px;text-align:center;top:241.7px;font-size:20.5px;line-height:20.5px;font-weight:bold;color:#fff;">Effects</div>
<div class="a" style="left:1040.0px;top:230.2px;width:70.0px;height:41.6px;background:#000"></div>
<div class="a" style="left:1040.0px;top:230.2px;width:70.0px;height:41.6px;border:3px solid #fff;border-radius:6px;box-sizing:border-box"></div>
<div class="t" style="left:675.0px;width:800px;text-align:center;top:241.7px;font-size:20.5px;line-height:20.5px;font-weight:bold;color:#fff;">Trans</div>
<div class="a" style="left:1111.4px;top:230.2px;width:68.6px;height:41.6px;background:#000"></div>
<div class="a" style="left:1111.4px;top:230.2px;width:68.6px;height:41.6px;border:3px solid #fff;border-radius:6px;box-sizing:border-box"></div>
<div class="t" style="left:745.7px;width:800px;text-align:center;top:241.7px;font-size:20.5px;line-height:20.5px;font-weight:bold;color:#fff;">Track</div>
<div class="a" style="left:1181.0px;top:230.2px;width:65.9px;height:41.6px;background:#000"></div>
<div class="a" style="left:1181.0px;top:230.2px;width:65.9px;height:41.6px;border:3px solid #fff;border-radius:6px;box-sizing:border-box"></div>
<div class="t" style="left:814.0px;width:800px;text-align:center;top:241.7px;font-size:20.5px;line-height:20.5px;font-weight:bold;color:#fff;">Shots</div>
<div class="a" style="left:1247.6px;top:230.2px;width:87.8px;height:41.6px;background:#000"></div>
<div class="a" style="left:1247.6px;top:230.2px;width:87.8px;height:41.6px;border:3px solid #fff;border-radius:6px;box-sizing:border-box"></div>
<div class="t" style="left:891.5px;width:800px;text-align:center;top:241.7px;font-size:20.5px;line-height:20.5px;font-weight:bold;color:#fff;">WT</div>
<div class="a" style="left:1337.5px;top:230.2px;width:84.3px;height:41.6px;background:#000"></div>
<div class="a" style="left:1337.5px;top:230.2px;width:84.3px;height:41.6px;border:3px solid #fff;border-radius:6px;box-sizing:border-box"></div>
<div class="t" style="left:979.7px;width:800px;text-align:center;top:241.7px;font-size:20.5px;line-height:20.5px;font-weight:bold;color:#fff;">Ed</div>
<div class="a" style="left:1422.5px;top:230.2px;width:96.0px;height:41.6px;background:#000"></div>
<div class="a" style="left:1422.5px;top:230.2px;width:96.0px;height:41.6px;border:3px solid #fff;border-radius:6px;box-sizing:border-box"></div>
<div class="t" style="left:1070.5px;width:800px;text-align:center;top:241.7px;font-size:20.5px;line-height:20.5px;font-weight:bold;color:#fff;">Owe</div>
<div class="a" style="left:1520.3px;top:230.2px;width:46.2px;height:41.6px;background:#000"></div>
<div class="a" style="left:1520.3px;top:230.2px;width:46.2px;height:41.6px;border:3px solid #fff;border-radius:6px;box-sizing:border-box"></div>
<div class="t" style="left:1143.4px;width:800px;text-align:center;top:241.7px;font-size:20.5px;line-height:20.5px;font-weight:bold;color:#fff;">?</div>
<div class="a" style="left:1568.3px;top:230.2px;width:142.5px;height:41.6px;background:#000"></div>
<div class="a" style="left:1568.3px;top:230.2px;width:142.5px;height:41.6px;border:3px solid #fff;border-radius:6px;box-sizing:border-box"></div>
<div class="t" style="left:1239.5px;width:800px;text-align:center;top:241.7px;font-size:20.5px;line-height:20.5px;font-weight:bold;color:#fff;">Attachments</div>
<div class="a" style="left:565.7px;top:280.0px;width:1140.6px;height:53.5px;background:#0000f8;border-radius:8px"></div>
<div class="a" style="left:1297.8px;top:330.0px;width:207.8px;height:51.3px;background:#0000f8"></div>
<div class="t" style="left:577.5px;top:298.0px;font-size:21.2px;line-height:21.2px;font-weight:bold;color:#fff;">Chronology:</div>
<div class="t" style="left:719.5px;top:298.0px;font-size:21.2px;line-height:21.2px;font-weight:bold;color:#fff;">Script Day</div>
<div class="a" style="left:845.0px;top:291.0px;width:121.7px;height:32.3px;background:#fff;border-style:solid;border-color:#9e9e9e #b4b4b4 #acacac #a2a2a2;border-width:3px 2px 2px 3px;box-sizing:border-box"></div>
<div class="t" style="left:855.5px;top:300.5px;font-size:19.5px;line-height:19.5px;font-weight:normal;color:#000;">1</div>
<div class="t" style="left:980.5px;top:298.0px;font-size:21.2px;line-height:21.2px;font-weight:bold;color:#fff;">Date</div>
<div class="a" style="left:1042.3px;top:290.3px;width:139.2px;height:33.5px;background:#fff;border-style:solid;border-color:#9e9e9e #b4b4b4 #acacac #a2a2a2;border-width:3px 2px 2px 3px;box-sizing:border-box"></div>
<div class="t" style="left:1053.5px;top:300.4px;font-size:19.6px;line-height:19.6px;font-weight:normal;color:#000;letter-spacing:1px">2025-01-24</div>
<div class="a" style="left:1201.8px;top:286.0px;width:121.4px;height:41.0px;background:#000;border-radius:7px"></div>
<div class="a" style="left:1201.8px;top:286.0px;width:121.4px;height:41.0px;border:3px solid #fff;border-radius:7px;box-sizing:border-box"></div>
<div class="t" style="left:862.5px;width:800px;text-align:center;top:296.4px;font-size:22px;line-height:22px;font-weight:bold;color:#fff;">Weekday</div>
<div class="a" style="left:1343.6px;top:290.4px;width:153.4px;height:32.9px;background:#fff;border-style:solid;border-color:#9e9e9e #b4b4b4 #acacac #a2a2a2;border-width:3px 2px 2px 3px;box-sizing:border-box"></div>
<div class="t" style="left:1354.5px;top:300.9px;font-size:19px;line-height:19px;font-weight:normal;color:#000;">FRIDAY</div>
<div class="t" style="left:1515.5px;top:298.0px;font-size:21.2px;line-height:21.2px;font-weight:bold;color:#fff;">Time</div>
<div class="a" style="left:1570.7px;top:291.0px;width:104.0px;height:32.3px;background:#fff;border-style:solid;border-color:#9e9e9e #b4b4b4 #acacac #a2a2a2;border-width:3px 2px 2px 3px;box-sizing:border-box"></div>
<div class="t" style="left:1580.0px;top:299.6px;font-size:20.5px;line-height:20.5px;font-weight:normal;color:#000;">19:22</div>
<div class="t" style="left:576.5px;top:346.0px;font-size:21.2px;line-height:21.2px;font-weight:bold;color:#fff;">Started</div>
<div class="a" style="left:675.7px;top:340.0px;width:181.0px;height:32.3px;background:#fff;border-style:solid;border-color:#9e9e9e #b4b4b4 #acacac #a2a2a2;border-width:3px 2px 2px 3px;box-sizing:border-box"></div>
<div class="t" style="left:876.3px;top:346.0px;font-size:21.2px;line-height:21.2px;font-weight:bold;color:#fff;">1/8ths Scripted</div>
<div class="a" style="left:1040.7px;top:340.0px;width:64.3px;height:32.3px;background:#fff;border-style:solid;border-color:#9e9e9e #b4b4b4 #acacac #a2a2a2;border-width:3px 2px 2px 3px;box-sizing:border-box"></div>
<div class="t" style="left:293.0px;width:800px;text-align:right;top:349.2px;font-size:19.3px;line-height:19.3px;font-weight:normal;color:#000;">3</div>
<div class="t" style="left:1118.5px;top:346.0px;font-size:21.2px;line-height:21.2px;font-weight:bold;color:#fff;">Pages</div>
<div class="a" style="left:1200.5px;top:339.6px;width:87.1px;height:33.2px;background:#fff;border-style:solid;border-color:#9e9e9e #b4b4b4 #acacac #a2a2a2;border-width:3px 2px 2px 3px;box-sizing:border-box"></div>
<div class="t" style="left:475.5px;width:800px;text-align:right;top:349.2px;font-size:19.3px;line-height:19.3px;font-weight:normal;color:#000;">3/8</div>
<div class="t" style="left:1314.5px;top:346.0px;font-size:21.2px;line-height:21.2px;font-weight:bold;color:#f0f0ff;">ERT</div>
<div class="a" style="left:1361.5px;top:339.6px;width:56.0px;height:33.2px;background:#fff;border-style:solid;border-color:#9e9e9e #b4b4b4 #acacac #a2a2a2;border-width:3px 2px 2px 3px;box-sizing:border-box"></div>
<div class="t" style="left:993.5px;width:800px;text-align:center;top:349.2px;font-size:19.3px;line-height:19.3px;font-weight:normal;color:#000;">00</div>
<div class="t" style="left:1428.5px;top:346.0px;font-size:21.2px;line-height:21.2px;font-weight:bold;color:#fff;">:</div>
<div class="a" style="left:1438.5px;top:339.6px;width:55.2px;height:33.2px;background:#fff;border-style:solid;border-color:#9e9e9e #b4b4b4 #acacac #a2a2a2;border-width:3px 2px 2px 3px;box-sizing:border-box"></div>
<div class="t" style="left:1070.1px;width:800px;text-align:center;top:349.2px;font-size:19.3px;line-height:19.3px;font-weight:normal;color:#000;">23</div>
<div class="t" style="left:1512.5px;top:346.0px;font-size:21.2px;line-height:21.2px;font-weight:bold;color:#fff;">Owe Shots</div>
<div class="a" style="left:1642.5px;top:345.3px;width:23.1px;height:23.1px;border:3px solid #fff;box-sizing:border-box;background:#000"></div>
<div class="t" style="left:576.5px;top:397.0px;font-size:21.2px;line-height:21.2px;font-weight:bold;color:#fff;">Credited</div>
<div class="a" style="left:675.7px;top:390.0px;width:181.0px;height:32.3px;background:#fff;border-style:solid;border-color:#9e9e9e #b4b4b4 #acacac #a2a2a2;border-width:3px 2px 2px 3px;box-sizing:border-box"></div>
<div class="a" style="left:871.7px;top:387.3px;width:164.3px;height:40.4px;background:#000"></div>
<div class="a" style="left:871.7px;top:387.3px;width:164.3px;height:40.4px;border:3px solid #fff;border-radius:7px;box-sizing:border-box"></div>
<div class="t" style="left:553.9px;width:800px;text-align:center;top:397.8px;font-size:21.2px;line-height:21.2px;font-weight:bold;color:#fff;">1/8ths Credited</div>
<div class="a" style="left:1040.7px;top:390.0px;width:64.3px;height:32.3px;background:#fff;border-style:solid;border-color:#9e9e9e #b4b4b4 #acacac #a2a2a2;border-width:3px 2px 2px 3px;box-sizing:border-box"></div>
<div class="t" style="left:293.0px;width:800px;text-align:right;top:399.7px;font-size:19.3px;line-height:19.3px;font-weight:normal;color:#000;">0</div>
<div class="t" style="left:1118.5px;top:397.0px;font-size:21.2px;line-height:21.2px;font-weight:bold;color:#fff;">Pages</div>
<div class="a" style="left:1200.5px;top:389.7px;width:87.1px;height:32.9px;background:#fff;border-style:solid;border-color:#9e9e9e #b4b4b4 #acacac #a2a2a2;border-width:3px 2px 2px 3px;box-sizing:border-box"></div>
<div class="t" style="left:475.5px;width:800px;text-align:right;top:399.7px;font-size:19.3px;line-height:19.3px;font-weight:normal;color:#000;">0/8</div>
<div class="t" style="left:1314.5px;top:397.0px;font-size:21.2px;line-height:21.2px;font-weight:bold;color:#fff;">ART</div>
<div class="a" style="left:1362.9px;top:389.7px;width:56.3px;height:32.9px;background:#fff;border-style:solid;border-color:#9e9e9e #b4b4b4 #acacac #a2a2a2;border-width:3px 2px 2px 3px;box-sizing:border-box"></div>
<div class="t" style="left:995.1px;width:800px;text-align:center;top:399.7px;font-size:19.3px;line-height:19.3px;font-weight:normal;color:#000;">00</div>
<div class="t" style="left:1430.0px;top:397.0px;font-size:21.2px;line-height:21.2px;font-weight:bold;color:#fff;">:</div>
<div class="a" style="left:1439.5px;top:389.7px;width:56.5px;height:32.9px;background:#fff;border-style:solid;border-color:#9e9e9e #b4b4b4 #acacac #a2a2a2;border-width:3px 2px 2px 3px;box-sizing:border-box"></div>
<div class="t" style="left:1071.8px;width:800px;text-align:center;top:399.7px;font-size:19.3px;line-height:19.3px;font-weight:normal;color:#000;">00</div>
<div class="t" style="left:1509.5px;top:397.0px;font-size:21.2px;line-height:21.2px;font-weight:bold;color:#fff;">+/-</div>
<div class="a" style="left:1557.8px;top:389.7px;width:54.6px;height:32.9px;background:#fff;border-style:solid;border-color:#9e9e9e #b4b4b4 #acacac #a2a2a2;border-width:3px 2px 2px 3px;box-sizing:border-box"></div>
<div class="t" style="left:801.5px;width:800px;text-align:right;top:399.7px;font-size:19.3px;line-height:19.3px;font-weight:normal;color:#000;">0</div>
<div class="t" style="left:1620.5px;top:397.0px;font-size:21.2px;line-height:21.2px;font-weight:bold;color:#fff;">:</div>
<div class="a" style="left:1630.7px;top:389.7px;width:55.2px;height:32.9px;background:#fff;border-style:solid;border-color:#9e9e9e #b4b4b4 #acacac #a2a2a2;border-width:3px 2px 2px 3px;box-sizing:border-box"></div>
<div class="t" style="left:1262.3px;width:800px;text-align:center;top:399.7px;font-size:19.3px;line-height:19.3px;font-weight:normal;color:#000;">00</div>
<div class="t" style="left:575.5px;top:445.3px;font-size:21.2px;line-height:21.2px;font-weight:bold;color:#fff;">Slug</div>
<div class="a" style="left:675.0px;top:436.5px;width:1034.0px;height:117.3px;background:#fff;border-radius:7px"></div>
<div class="t" style="left:683.5px;top:438.6px;font-size:23.5px;line-height:23.5px;font-weight:normal;color:#000;">SANDY arrives at the gallery looking beat up.</div>
<div class="a" style="left:551.7px;top:574.3px;width:1169.8px;height:569.0px;border:1.5px solid #fff;border-radius:6px;box-sizing:border-box"></div>
<div class="a" style="left:565px;top:586.7px;width:1031px;height:543.3px;background:#fff;border-radius:12px;overflow:hidden">
<div class="t" style="left:9.0px;top:-0.8px;font-size:22.6px;line-height:22.6px;font-weight:normal;color:#d8343e;">1</div>
<div class="a" style="left:74.4px;top:10.8px;width:817.9px;height:3.0px;background:repeating-linear-gradient(90deg,#dc3440 0 6.9px,transparent 6.9px 11.67px)"></div>
<div class="t" style="left:927.5px;top:-0.8px;font-size:22.6px;line-height:22.6px;font-weight:normal;color:#d8343e;">1</div>
<div class="m" style="left:15.6px;top:25.7px;font-size:26.1px;line-height:26.1px;color:#000">1 INT. ART GALLERY LOBBY - NIGHT</div>
<div class="m" style="left:15.6px;top:77.7px;font-size:26.1px;line-height:26.1px;color:#000">An opening reception. Guests mill around a buffet table,</div>
<div class="m" style="left:15.6px;top:103.7px;font-size:26.1px;line-height:26.1px;color:#000">nibbling, talking, drinking, everyone having a fine time.</div>
<div class="m" style="left:15.6px;top:155.7px;font-size:26.1px;line-height:26.1px;color:#000">SANDY MARCOS (40) drifts in from the street. Her designer</div>
<div class="m" style="left:15.6px;top:181.7px;font-size:26.1px;line-height:26.1px;color:#000">dress is torn, makeup smeared. A bandage wraps her arm.</div>
<div class="m" style="left:15.6px;top:233.7px;font-size:26.1px;line-height:26.1px;color:#000">BRIANA, the host, calls to Sandy from 20 feet away.</div>
<div class="m" style="left:335.5px;top:285.7px;font-size:26.1px;line-height:26.1px;color:#000">BRIANA  (1)</div>
<div class="m" style="left:180.0px;top:311.7px;font-size:26.1px;line-height:26.1px;color:#000">Where have you been?</div>
<div class="m" style="left:15.6px;top:363.7px;font-size:26.1px;line-height:26.1px;color:#000">Briana moves closer, and Sandy's appearance sinks in.</div>
<div class="m" style="left:335.5px;top:415.7px;font-size:26.1px;line-height:26.1px;color:#000">BRIANA  (2)</div>
<div class="m" style="left:178.0px;top:441.7px;font-size:26.1px;line-height:26.1px;color:#000">...Where have you been?</div>
<div class="m" style="left:335.5px;top:493.7px;font-size:26.1px;line-height:26.1px;color:#000">SANDY  (3)</div>
<div class="m" style="left:180.0px;top:519.7px;font-size:26.1px;line-height:26.1px;color:#000">Should've stayed in the cab.</div>
</div>
<div class="a" style="left:1609.2px;top:587.8px;width:98.1px;height:39.8px;background:#000"></div>
<div class="a" style="left:1609.2px;top:587.8px;width:98.1px;height:39.8px;border:3px solid #fff;border-radius:7px;box-sizing:border-box"></div>
<div class="t" style="left:1258.2px;width:800px;text-align:center;top:597.4px;font-size:22.5px;line-height:22.5px;font-weight:bold;color:#fff;">Clear</div>
<div class="a" style="left:1609.2px;top:642.9px;width:98.1px;height:40.2px;background:#000"></div>
<div class="a" style="left:1609.2px;top:642.9px;width:98.1px;height:40.2px;border:3px solid #fff;border-radius:7px;box-sizing:border-box"></div>
<div class="t" style="left:1258.2px;width:800px;text-align:center;top:652.7px;font-size:22.5px;line-height:22.5px;font-weight:bold;color:#fff;">Diff</div>
<div class="a" style="left:1609.2px;top:698.0px;width:98.1px;height:40.2px;background:#000"></div>
<div class="a" style="left:1609.2px;top:698.0px;width:98.1px;height:40.2px;border:3px solid #fff;border-radius:7px;box-sizing:border-box"></div>
<div class="t" style="left:1258.2px;width:800px;text-align:center;top:707.8px;font-size:22.5px;line-height:22.5px;font-weight:bold;color:#fff;">Edit</div>
<div class="a" style="left:67.0px;top:1159.5px;width:1666.0px;height:73.5px;background:#555;border:3px solid #fff;border-radius:6px;box-sizing:border-box"></div>
<div class="a" style="left:89.0px;top:1171.3px;width:156.5px;height:48.5px;background:#aaa"></div>
<div class="a" style="left:89.0px;top:1171.3px;width:156.5px;height:48.5px;border:3px solid #fff;border-radius:7px;box-sizing:border-box"></div>
<div class="t" style="left:-232.8px;width:800px;text-align:center;top:1183.9px;font-size:25.2px;line-height:25.2px;font-weight:bold;color:#eee;">Script</div>
<div class="a" style="left:258.6px;top:1171.3px;width:155.6px;height:48.5px;background:#000"></div>
<div class="a" style="left:258.6px;top:1171.3px;width:155.6px;height:48.5px;border:3px solid #fff;border-radius:7px;box-sizing:border-box"></div>
<div class="t" style="left:-63.6px;width:800px;text-align:center;top:1183.9px;font-size:25.2px;line-height:25.2px;font-weight:bold;color:#fff;">Production</div>
<div class="a" style="left:659.3px;top:1171.3px;width:155.7px;height:48.5px;background:#000"></div>
<div class="a" style="left:659.3px;top:1171.3px;width:155.7px;height:48.5px;border:3px solid #fff;border-radius:7px;box-sizing:border-box"></div>
<div class="t" style="left:337.1px;width:800px;text-align:center;top:1183.9px;font-size:25.2px;line-height:25.2px;font-weight:bold;color:#fff;">Characters</div>
<div class="a" style="left:828.7px;top:1171.3px;width:156.3px;height:48.5px;background:#000"></div>
<div class="a" style="left:828.7px;top:1171.3px;width:156.3px;height:48.5px;border:3px solid #fff;border-radius:7px;box-sizing:border-box"></div>
<div class="t" style="left:506.9px;width:800px;text-align:center;top:1183.9px;font-size:25.2px;line-height:25.2px;font-weight:bold;color:#fff;">Actors</div>
<div class="a" style="left:997.7px;top:1171.3px;width:156.3px;height:48.5px;background:#000"></div>
<div class="a" style="left:997.7px;top:1171.3px;width:156.3px;height:48.5px;border:3px solid #fff;border-radius:7px;box-sizing:border-box"></div>
<div class="t" style="left:675.8px;width:800px;text-align:center;top:1183.9px;font-size:25.2px;line-height:25.2px;font-weight:bold;color:#fff;">Reports</div>
<div class="a" style="left:1384.3px;top:1171.3px;width:155.2px;height:48.5px;background:#aaa"></div>
<div class="a" style="left:1384.3px;top:1171.3px;width:155.2px;height:48.5px;border:3px solid #fff;border-radius:7px;box-sizing:border-box"></div>
<div class="t" style="left:1061.9px;width:800px;text-align:center;top:1183.9px;font-size:25.2px;line-height:25.2px;font-weight:bold;color:#eee;">Last Shot</div>
<div class="a" style="left:1553.3px;top:1171.3px;width:156.0px;height:48.5px;background:#aaa"></div>
<div class="a" style="left:1553.3px;top:1171.3px;width:156.0px;height:48.5px;border:3px solid #fff;border-radius:7px;box-sizing:border-box"></div>
<div class="t" style="left:1231.3px;width:800px;text-align:center;top:1183.9px;font-size:25.2px;line-height:25.2px;font-weight:bold;color:#eee;">Shot</div>
<div class="a" style="left:660.0px;top:1233.0px;width:480.0px;height:6.0px;background:#e8e8e8;border-radius:0 0 4px 4px"></div>
</body></html>
